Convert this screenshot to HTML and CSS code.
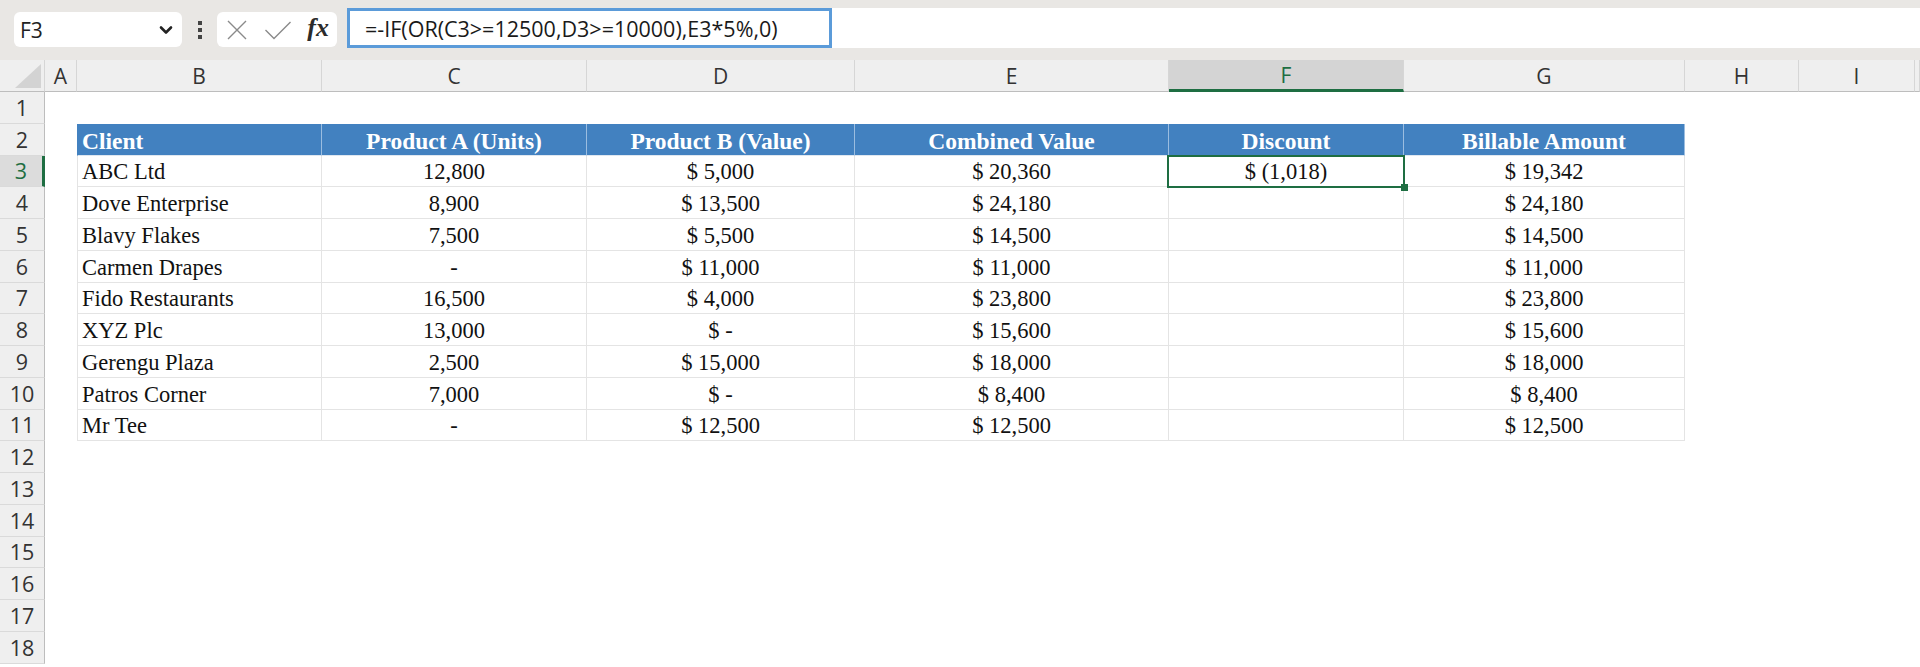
FILE: index.html
```html
<!DOCTYPE html>
<html>
<head>
    <meta charset="utf-8">
    <title>Client Discounts - Sheet1</title>
    <link rel="stylesheet" href="styles.css">
</head>
<body>
    <div class="formula-bar">
        <div class="name-box">
            <span>F3</span>
            <svg class="chevron" width="14" height="10" viewBox="0 0 14 10"><path d="M2 2.5 L7 7.5 L12 2.5" fill="none" stroke="#222" stroke-width="2.6" stroke-linecap="round" stroke-linejoin="round"/></svg>
        </div>
        <div class="grip"><i></i><i></i><i></i></div>
        <div class="fx-box">
            <svg width="22" height="22" viewBox="0 0 22 22"><path d="M2 2 L20 20 M20 2 L2 20" stroke="#8a8a8a" stroke-width="1.4" fill="none"/></svg>
            <svg width="28" height="22" viewBox="0 0 28 22"><path d="M1.5 11 L10 19.5 L26.5 3" stroke="#8a8a8a" stroke-width="1.4" fill="none"/></svg>
            <span class="fx">fx</span>
        </div>
        <div class="formula">
            <div class="formula-edit">=-IF(OR(C3&gt;=12500,D3&gt;=10000),E3*5%,0)</div>
        </div>
    </div>

    <table class="sheet">
        <colgroup>
            <col style="width:45px"><col style="width:32px"><col style="width:245px"><col style="width:265px">
            <col style="width:268px"><col style="width:314px"><col style="width:235px"><col style="width:281px">
            <col style="width:114px"><col style="width:116px"><col>
        </colgroup>
        <thead>
            <tr>
                <th class="corner"><div><span class="tri"></span></div></th>
                <th>A</th><th>B</th><th>C</th><th>D</th><th>E</th>
                <th class="active">F</th><th>G</th><th>H</th><th>I</th><th></th>
            </tr>
        </thead>
        <tbody>
            <tr><th>1</th><td></td><td></td><td></td><td></td><td></td><td></td><td></td><td></td><td></td><td></td></tr>
            <tr><th>2</th><td></td>
                <td class="hd left">Client</td><td class="hd">Product A (Units)</td><td class="hd">Product B (Value)</td>
                <td class="hd">Combined Value</td><td class="hd">Discount</td><td class="hd">Billable Amount</td>
                <td></td><td></td><td></td></tr>
            <tr><th class="active">3</th><td></td>
                <td class="t left">ABC Ltd</td><td class="t">12,800</td><td class="t">$ 5,000</td><td class="t">$ 20,360</td>
                <td class="t sel">$ (1,018)</td><td class="t">$ 19,342</td><td></td><td></td><td></td></tr>
            <tr><th>4</th><td></td>
                <td class="t left">Dove Enterprise</td><td class="t">8,900</td><td class="t">$ 13,500</td><td class="t">$ 24,180</td>
                <td class="t"></td><td class="t">$ 24,180</td><td></td><td></td><td></td></tr>
            <tr><th>5</th><td></td>
                <td class="t left">Blavy Flakes</td><td class="t">7,500</td><td class="t">$ 5,500</td><td class="t">$ 14,500</td>
                <td class="t"></td><td class="t">$ 14,500</td><td></td><td></td><td></td></tr>
            <tr><th>6</th><td></td>
                <td class="t left">Carmen Drapes</td><td class="t">-</td><td class="t">$ 11,000</td><td class="t">$ 11,000</td>
                <td class="t"></td><td class="t">$ 11,000</td><td></td><td></td><td></td></tr>
            <tr><th>7</th><td></td>
                <td class="t left">Fido Restaurants</td><td class="t">16,500</td><td class="t">$ 4,000</td><td class="t">$ 23,800</td>
                <td class="t"></td><td class="t">$ 23,800</td><td></td><td></td><td></td></tr>
            <tr><th>8</th><td></td>
                <td class="t left">XYZ Plc</td><td class="t">13,000</td><td class="t">$ -</td><td class="t">$ 15,600</td>
                <td class="t"></td><td class="t">$ 15,600</td><td></td><td></td><td></td></tr>
            <tr><th>9</th><td></td>
                <td class="t left">Gerengu Plaza</td><td class="t">2,500</td><td class="t">$ 15,000</td><td class="t">$ 18,000</td>
                <td class="t"></td><td class="t">$ 18,000</td><td></td><td></td><td></td></tr>
            <tr><th>10</th><td></td>
                <td class="t left">Patros Corner</td><td class="t">7,000</td><td class="t">$ -</td><td class="t">$ 8,400</td>
                <td class="t"></td><td class="t">$ 8,400</td><td></td><td></td><td></td></tr>
            <tr><th>11</th><td></td>
                <td class="t left">Mr Tee</td><td class="t">-</td><td class="t">$ 12,500</td><td class="t">$ 12,500</td>
                <td class="t"></td><td class="t">$ 12,500</td><td></td><td></td><td></td></tr>
            <tr><th>12</th><td></td><td></td><td></td><td></td><td></td><td></td><td></td><td></td><td></td><td></td></tr>
            <tr><th>13</th><td></td><td></td><td></td><td></td><td></td><td></td><td></td><td></td><td></td><td></td></tr>
            <tr><th>14</th><td></td><td></td><td></td><td></td><td></td><td></td><td></td><td></td><td></td><td></td></tr>
            <tr><th>15</th><td></td><td></td><td></td><td></td><td></td><td></td><td></td><td></td><td></td><td></td></tr>
            <tr><th>16</th><td></td><td></td><td></td><td></td><td></td><td></td><td></td><td></td><td></td><td></td></tr>
            <tr><th>17</th><td></td><td></td><td></td><td></td><td></td><td></td><td></td><td></td><td></td><td></td></tr>
            <tr><th>18</th><td></td><td></td><td></td><td></td><td></td><td></td><td></td><td></td><td></td><td></td></tr>
        </tbody>
    </table>
</body>
</html>
```

FILE: styles.css
```css
body {
    margin: 0;
    width: 1920px;
    height: 667px;
    overflow: hidden;
    background: #fff;
    font-family: "Liberation Serif", "Times New Roman", serif;
}

/* formula bar */
.formula-bar {
    display: flex;
    align-items: flex-start;
    height: 60px;
    box-sizing: border-box;
    padding: 8px 0 0 14px;
    background: #e9e7e4;
}
.name-box {
    margin-top: 4px;
    width: 168px;
    height: 35px;
    box-sizing: border-box;
    padding: 0 9px 0 6px;
    display: flex;
    align-items: center;
    justify-content: space-between;
    background: #fff;
    border-radius: 6px;
    font-family: "Open Sans", sans-serif;
    font-size: 21px;
    color: #222;
}
.grip {
    margin-top: 4px;
    width: 35px;
    height: 35px;
    display: flex;
    flex-direction: column;
    align-items: center;
    justify-content: center;
    gap: 3px;
}
.grip i {
    display: block;
    width: 4px;
    height: 4px;
    background: #444;
}
.fx-box {
    margin-top: 4px;
    width: 120px;
    height: 35px;
    box-sizing: border-box;
    padding: 0 8px 0 9px;
    display: flex;
    align-items: center;
    justify-content: space-between;
    background: #fff;
    border-radius: 6px;
}
.fx {
    font-family: "Liberation Serif", serif;
    font-style: italic;
    font-weight: bold;
    font-size: 26px;
    color: #2b2b2b;
    line-height: 1;
    margin-top: -3px;
}
.formula {
    flex: 1;
    margin-left: 10px;
    height: 40px;
    background: #fff;
}
.formula-edit {
    width: 485px;
    height: 40px;
    box-sizing: border-box;
    border: 3px solid #5b9bd9;
    padding-left: 15px;
    font-family: "Open Sans", sans-serif;
    font-size: 21.5px;
    line-height: 36px;
    color: #1a1a1a;
    white-space: nowrap;
}

/* grid */
.sheet {
    table-layout: fixed;
    width: 1920px;
    border-collapse: separate;
    border-spacing: 0;
}
.sheet thead tr {
    height: 32px;
}
.sheet tbody tr {
    height: 31.75px;
}
.sheet thead th {
    padding: 0;
    background: #efefef;
    border-right: 1px solid #d6d6d6;
    border-bottom: 1px solid #bdbdbd;
    font-family: "Open Sans", sans-serif;
    font-weight: normal;
    font-size: 21px;
    color: #333;
}
.sheet tbody th {
    padding: 0;
    background: #efefef;
    border-right: 1px solid #bdbdbd;
    border-bottom: 1px solid #dadada;
    font-family: "Open Sans", sans-serif;
    font-weight: normal;
    font-size: 21.5px;
    color: #333;
}
.sheet thead th.active {
    background: #d4d4d4;
    color: #1e6e42;
    border-bottom: 3px solid #1e6e42;
}
.sheet tbody th.active {
    background: #dcdcdc;
    color: #1e6e42;
    border-right: 3px solid #1e6e42;
}
.corner div {
    height: 31px;
    display: flex;
    align-items: flex-end;
    justify-content: flex-end;
    padding: 0 3px 3px 0;
    box-sizing: border-box;
}
.tri {
    width: 0;
    height: 0;
    border-left: 26px solid transparent;
    border-bottom: 24px solid #d3d3d3;
}

.sheet td {
    padding: 0 4px 1px;
    vertical-align: bottom;
    text-align: center;
    font-size: 22.5px;
    color: #111;
    white-space: nowrap;
    overflow: visible;
}
.sheet td.left {
    text-align: left;
    border-left: 1px solid #e4e4e4;
}
.sheet td.t {
    border-right: 1px solid #e4e4e4;
    border-bottom: 1px solid #e4e4e4;
}
.sheet td.hd {
    background: #4281c0;
    color: #fff;
    font-weight: bold;
    font-size: 23.5px;
    border-right: 1px solid #9bbde0;
    border-bottom: 1px solid #dfe7f0;
    padding-bottom: 0;
}
.sheet td.hd.left {
    border-left-color: #4281c0;
}
.sheet td.sel {
    position: relative;
}
.sel::after {
    content: "";
    position: absolute;
    left: -2px;
    top: -1px;
    right: -2px;
    bottom: -2px;
    border: 2px solid #1e6e42;
}
.sel::before {
    content: "";
    position: absolute;
    right: -5px;
    bottom: -5px;
    width: 7px;
    height: 7px;
    background: #1e6e42;
    z-index: 1;
}
```
